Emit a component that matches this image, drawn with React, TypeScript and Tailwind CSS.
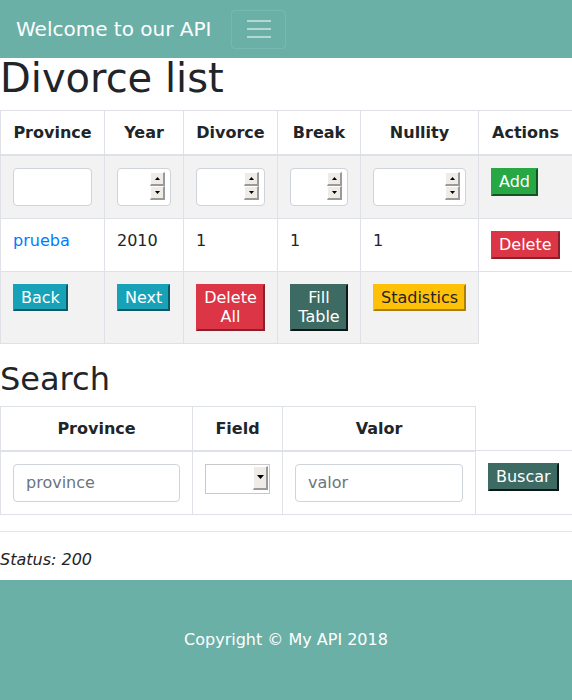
import React from "react";

const Spinner = () => (
  <div className="absolute right-[5px] top-[3px] flex flex-col">
    {[0, 1].map((i) => (
      <div
        key={i}
        className="flex h-[14px] w-[15px] items-center justify-center border-t border-l border-r-2 border-b-2 border-t-white border-l-white border-r-[#9a9a9a] border-b-[#9a9a9a] bg-[#efebe7]"
      >
        <svg width="5" height="3" viewBox="0 0 5 3">
          {i === 0 ? <path d="M2.5 0 L5 3 L0 3 Z" fill="#000" /> : <path d="M0 0 L5 0 L2.5 3 Z" fill="#000" />}
        </svg>
      </div>
    ))}
  </div>
);

const NumBox = () => (
  <div className="relative h-[38px] w-full rounded-[4px] border border-[#ced4da] bg-white">
    <Spinner />
  </div>
);

const TextBox = ({ placeholder }: { placeholder?: string }) => (
  <input
    readOnly
    placeholder={placeholder}
    className="block h-[38px] w-full rounded-[4px] border border-[#ced4da] bg-white px-3 text-[16px] text-[#495057] outline-none placeholder:text-[#6c757d]"
  />
);

const Btn = ({ cls, children }: { cls: string; children: React.ReactNode }) => (
  <button className={`border-2 px-[6px] py-[2px] align-top text-[16px] leading-[19.5px] ${cls}`}>{children}</button>
);

const td = "border border-[#dee2e6] p-3 align-top leading-[19px]";
const th = "border border-[#dee2e6] border-b-2 p-3 align-top text-center font-bold leading-[19px]";

export default function App() {
  return (
    <div className="font-['DejaVu_Sans',sans-serif] text-[16px] text-[#212529] bg-white">
      <nav className="flex h-[58px] items-center bg-[#6ab0a7] px-4">
        <span className="text-[20px] leading-[30px] text-white">Welcome to our API</span>
        <div className="ml-[20px] flex h-[39px] w-[55px] items-center justify-center rounded-[4px] border border-white/10">
          <svg width="26" height="20" viewBox="0 0 26 20">
            <path d="M1 2h24M1 10h24M1 18h24" stroke="rgba(255,255,255,0.5)" strokeWidth="2" />
          </svg>
        </div>
      </nav>

      <h1 className="mb-[12px] text-[40px] leading-[40px]">Divorce list</h1>

      <table className="mb-4 w-full table-fixed border-collapse">
        <colgroup>
          <col className="w-[104px]" />
          <col className="w-[79px]" />
          <col className="w-[94px]" />
          <col className="w-[83px]" />
          <col className="w-[118px]" />
          <col className="w-[94px]" />
        </colgroup>
        <thead>
          <tr>
            <th className={th}>Province</th>
            <th className={th}>Year</th>
            <th className={th}>Divorce</th>
            <th className={th}>Break</th>
            <th className={th}>Nullity</th>
            <th className={th}>Actions</th>
          </tr>
        </thead>
        <tbody>
          <tr className="bg-[#f2f2f2]">
            <td className={td}>
              <TextBox />
            </td>
            <td className={td}>
              <NumBox />
            </td>
            <td className={td}>
              <NumBox />
            </td>
            <td className={td}>
              <NumBox />
            </td>
            <td className={td}>
              <NumBox />
            </td>
            <td className={td}>
              <Btn cls="bg-[#28a745] text-white border-[#28a745] border-r-[#145322] border-b-[#145322]">Add</Btn>
            </td>
          </tr>
          <tr>
            <td className={`${td} text-[#007bff]`}>prueba</td>
            <td className={td}>2010</td>
            <td className={td}>1</td>
            <td className={td}>1</td>
            <td className={td}>1</td>
            <td className={td}>
              <Btn cls="bg-[#dc3545] text-white border-[#dc3545] border-r-[#88212b] border-b-[#88212b]">Delete</Btn>
            </td>
          </tr>
          <tr>
            <td className={`${td} bg-[#f2f2f2]`}>
              <Btn cls="bg-[#17a2b8] text-white border-[#17a2b8] border-r-[#0c5864] border-b-[#0c5864]">Back</Btn>
            </td>
            <td className={`${td} bg-[#f2f2f2]`}>
              <Btn cls="bg-[#17a2b8] text-white border-[#17a2b8] border-r-[#0c5864] border-b-[#0c5864]">Next</Btn>
            </td>
            <td className={`${td} bg-[#f2f2f2]`}>
              <Btn cls="bg-[#dc3545] text-white border-[#dc3545] border-r-[#88212b] border-b-[#88212b]">Delete All</Btn>
            </td>
            <td className={`${td} bg-[#f2f2f2]`}>
              <Btn cls="bg-[#3d6b63] text-white border-[#3d6b63] border-r-[#0d1715] border-b-[#0d1715]">Fill Table</Btn>
            </td>
            <td className={`${td} bg-[#f2f2f2]`}>
              <Btn cls="bg-[#ffc107] text-[#212529] border-[#ffc107] border-r-[#ab8105] border-b-[#ab8105]">Stadistics</Btn>
            </td>
          </tr>
        </tbody>
      </table>

      <h2 className="mb-2 text-[32px] leading-[38.4px]">Search</h2>

      <table className="mb-4 w-full table-fixed border-collapse">
        <colgroup>
          <col className="w-[192px]" />
          <col className="w-[90px]" />
          <col className="w-[193px]" />
          <col className="w-[97px]" />
        </colgroup>
        <thead>
          <tr>
            <th className={th}>Province</th>
            <th className={th}>Field</th>
            <th className={th}>Valor</th>
          </tr>
        </thead>
        <tbody>
          <tr>
            <td className={td}>
              <TextBox placeholder="province" />
            </td>
            <td className={td}>
              <div className="relative h-[30px] w-[65px] border border-[#c8c8c8] bg-white">
                <div className="absolute right-[1px] top-[1px] flex h-[24px] w-[15px] items-center justify-center border-t border-l border-r-2 border-b-2 border-t-white border-l-white border-r-[#9a9a9a] border-b-[#9a9a9a] bg-[#efebe7]">
                  <svg width="7" height="4" viewBox="0 0 7 4">
                    <path d="M0 0 L7 0 L3.5 4 Z" fill="#000" />
                  </svg>
                </div>
              </div>
            </td>
            <td className={td}>
              <TextBox placeholder="valor" />
            </td>
            <td className={td}>
              <Btn cls="bg-[#3d6b63] text-white border-[#3d6b63] border-r-[#0d1715] border-b-[#0d1715]">Buscar</Btn>
            </td>
          </tr>
        </tbody>
      </table>

      <hr className="mb-4 border-t border-black/10" />

      <p className="mb-[8px] italic leading-[24px]">Status: 200</p>

      <footer className="flex h-[120px] items-center justify-center bg-[#6ab0a7] text-white">
        Copyright © My API 2018
      </footer>
    </div>
  );
}
